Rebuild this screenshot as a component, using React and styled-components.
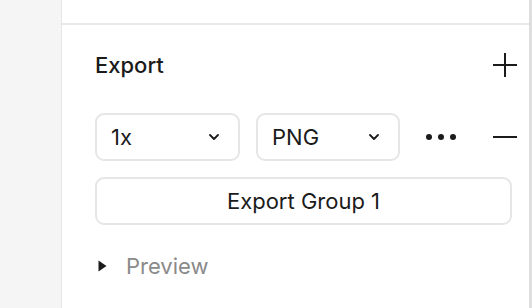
import React from "react"
import styled, { createGlobalStyle } from "styled-components"

const GlobalStyle = createGlobalStyle`
    html, body {
        margin: 0;
        padding: 0;
        background: #f5f5f5;
        font-family: Inter, "Noto Sans", sans-serif;
        color: #1b1b1b;
    }
`

const Page = styled.div`
    display: flex;
    height: 308px;
    overflow: hidden;
`

const Gutter = styled.div`
    width: 61px;
    flex-shrink: 0;
    background: #f5f5f5;
`

const Panel = styled.div`
    flex: 1;
    display: flex;
    flex-direction: column;
    background: #fff;
    border-left: 1px solid #e6e6e6;
    border-right: 3px solid #dedede;
`

const TopBlock = styled.div`
    height: 23px;
    border-bottom: 2px solid #e8e8e8;
`

const Section = styled.div`
    display: flex;
    flex-direction: column;
    padding: 24px 12px 0 33px;
`

const Header = styled.div`
    display: flex;
    align-items: center;
    justify-content: space-between;
    height: 32px;
`

const Title = styled.span`
    font-size: 22px;
    font-weight: 500;
`

const IconButton = styled.button`
    display: flex;
    align-items: center;
    justify-content: center;
    width: ${p => p.$w || 24}px;
    height: 24px;
    padding: 0;
    border: none;
    background: none;
    color: #1b1b1b;
    margin-left: ${p => p.$ml || "0"};
`

const Row = styled.div`
    display: flex;
    align-items: center;
    gap: 16px;
    margin-top: 32px;
`

const Select = styled.div`
    box-sizing: border-box;
    display: flex;
    align-items: center;
    justify-content: space-between;
    width: ${p => p.$w}px;
    height: 48px;
    padding: 0 19px 0 14px;
    border: 2px solid #e6e6e6;
    border-radius: 9px;
    font-size: 22px;
`

const ExportButton = styled.button`
    box-sizing: border-box;
    height: 48px;
    margin: 16px 5px 0 0;
    border: 2px solid #e6e6e6;
    border-radius: 9px;
    background: #fff;
    font-family: inherit;
    font-size: 22px;
    color: #1b1b1b;
`

const PreviewRow = styled.div`
    display: flex;
    align-items: center;
    height: 24px;
    margin-top: 29px;
    padding-left: 3px;
    gap: 19px;
    font-size: 22px;
    color: #8a8a8a;
`

const Chevron = () => (
    <svg width="10" height="6" viewBox="0 0 10 6" fill="none">
        <path d="M1 1l4 4 4-4" stroke="#1b1b1b" strokeWidth="1.8" strokeLinecap="round" strokeLinejoin="round"/>
    </svg>
)

const Plus = () => (
    <svg width="24" height="24" viewBox="0 0 24 24">
        <path d="M12 0v24M0 12h24" stroke="#1b1b1b" strokeWidth="2"/>
    </svg>
)

const Minus = () => (
    <svg width="24" height="24" viewBox="0 0 24 24">
        <path d="M0 12h24" stroke="#1b1b1b" strokeWidth="2"/>
    </svg>
)

const Dots = () => (
    <svg width="32" height="8" viewBox="0 0 32 8">
        <circle cx="4" cy="4" r="3" fill="#1b1b1b"/>
        <circle cx="16" cy="4" r="3" fill="#1b1b1b"/>
        <circle cx="28" cy="4" r="3" fill="#1b1b1b"/>
    </svg>
)

const Caret = () => (
    <svg width="9" height="12" viewBox="0 0 9 12">
        <path d="M0.5 0.5L8.5 6L0.5 11.5Z" fill="#1b1b1b"/>
    </svg>
)

const App = () => {
    return (
        <>
            <GlobalStyle/>
            <Page>
                <Gutter/>
                <Panel>
                    <TopBlock/>
                    <Section>
                        <Header>
                            <Title>Export</Title>
                            <IconButton><Plus/></IconButton>
                        </Header>
                        <Row>
                            <Select $w={145}>1x<Chevron/></Select>
                            <Select $w={144}>PNG<Chevron/></Select>
                            <IconButton $w={50}><Dots/></IconButton>
                            <IconButton $ml="auto"><Minus/></IconButton>
                        </Row>
                        <ExportButton>Export Group 1</ExportButton>
                        <PreviewRow>
                            <Caret/>
                            <span>Preview</span>
                        </PreviewRow>
                    </Section>
                </Panel>
            </Page>
        </>
    )
}

export default App
